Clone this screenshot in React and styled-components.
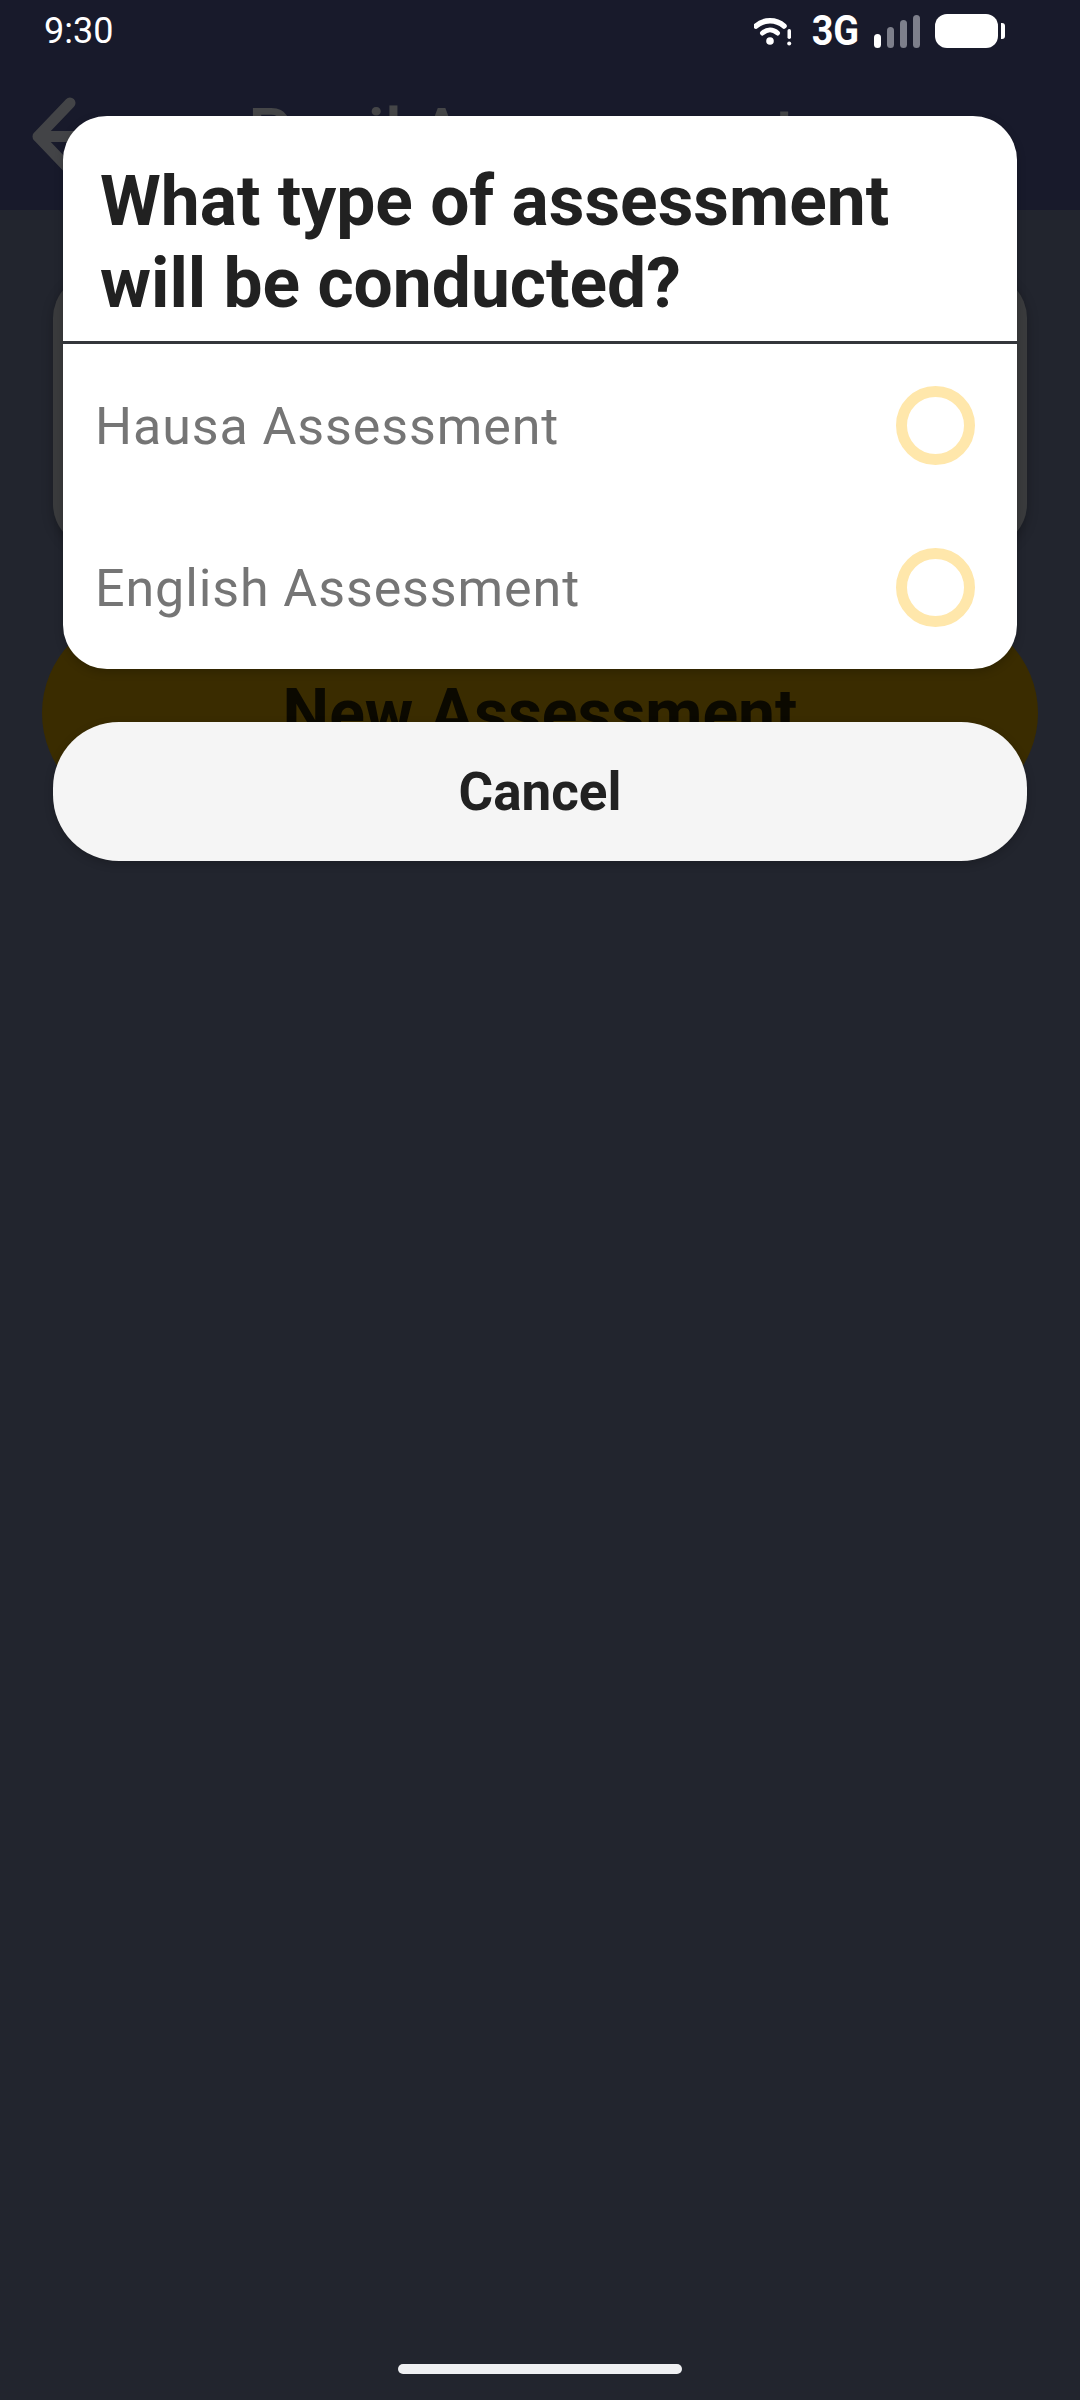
import styled, { createGlobalStyle } from "styled-components";

const GlobalStyle = createGlobalStyle`
  html, body {
    margin: 0;
    padding: 0;
    background: #22252e;
  }
  * {
    box-sizing: border-box;
  }
`;

const Screen = styled.div`
  position: relative;
  width: 1080px;
  height: 2400px;
  overflow: hidden;
  display: flex;
  flex-direction: column;
  background: #22252e;
  font-family: Roboto, "Liberation Sans", sans-serif;
`;

const TopArea = styled.div`
  height: 210px;
  flex-shrink: 0;
  background: #181a2b;
  display: flex;
  flex-direction: column;
`;

const StatusBar = styled.div`
  height: 62px;
  padding: 0 75px 0 44px;
  display: flex;
  align-items: center;
  justify-content: space-between;
  color: #fff;
`;

const Clock = styled.span`
  font-size: 36px;
  line-height: 58px;
`;

const StatusIcons = styled.div`
  display: flex;
  align-items: center;
  gap: 15px;
`;

const NetworkLabel = styled.span`
  font-size: 42px;
  font-weight: 700;
  line-height: 62px;
  margin: 0 -3px 0 2px;
  transform: scaleX(0.9);
`;

const Toolbar = styled.div`
  flex: 1;
  display: flex;
  align-items: flex-start;
  padding: 30px 0 0 26px;
`;

const ToolbarTitle = styled.h1`
  margin: 2px 0 0 112px;
  font-size: 68px;
  line-height: 80px;
  font-weight: 500;
  color: #454648;
`;

const Content = styled.div`
  flex: 1;
  display: flex;
  flex-direction: column;
  align-items: center;
  padding-top: 64px;
`;

const BackCard = styled.div`
  width: 974px;
  height: 274px;
  border-radius: 44px;
  background: #3a3b3d;
  box-shadow: 0 4px 12px rgba(0, 0, 0, 0.25);
`;

const NewButton = styled.div`
  width: 996px;
  height: 200px;
  margin-top: 65px;
  border-radius: 100px;
  background: #3a2c00;
  color: #0b0900;
  font-size: 66px;
  font-weight: 700;
  display: flex;
  align-items: center;
  justify-content: center;
`;

const HomeBar = styled.div`
  position: absolute;
  left: 398px;
  bottom: 26px;
  width: 284px;
  height: 10px;
  border-radius: 5px;
  background: #eff0f2;
`;

const Dialog = styled.div`
  position: absolute;
  top: 116px;
  left: 53px;
  width: 974px;
  display: flex;
  flex-direction: column;
  align-items: center;
  gap: 53px;
`;

const Sheet = styled.div`
  width: 954px;
  height: 553px;
  border-radius: 44px;
  background: #fff;
  box-shadow: 0 3px 10px rgba(0, 0, 0, 0.2);
  overflow: hidden;
`;

const SheetHeader = styled.div`
  height: 228px;
  padding: 45px 37px 0;
  border-bottom: 3px solid #34363b;
`;

const SheetTitle = styled.h2`
  margin: 0;
  font-size: 69.5px;
  line-height: 82px;
  font-weight: 700;
  color: #212121;
`;

const Option = styled.div`
  height: 162px;
  padding: 0 42px 0 32px;
  display: flex;
  align-items: center;
  justify-content: space-between;
`;

const OptionLabel = styled.span`
  margin-top: 2px;
  font-size: 52px;
  letter-spacing: 0.9px;
  color: #757575;
`;

const Radio = styled.span`
  width: 79px;
  height: 79px;
  border-radius: 50%;
  border: 11px solid #ffe7ab;
`;

const CancelButton = styled.div`
  width: 974px;
  height: 139px;
  border-radius: 66px;
  background: #f5f5f5;
  box-shadow: 0 3px 10px rgba(0, 0, 0, 0.2);
  color: #212121;
  font-size: 53px;
  font-weight: 700;
  display: flex;
  align-items: center;
  justify-content: center;
`;

const WifiIcon = () => (
  <svg width="38" height="30" viewBox="0 0 38 30" fill="none">
    <path d="M2 10C10 3 22 3 30 10" stroke="#fff" strokeWidth="5.500" strokeLinecap="round" />
    <path d="M8.500 17C13 13 19 13 23.500 17" stroke="#fff" strokeWidth="5" strokeLinecap="round" />
    <circle cx="16" cy="25" r="3.800" fill="#fff" />
    <rect x="33.500" y="13" width="3.500" height="10" rx="1.700" fill="#fff" />
    <circle cx="35.200" cy="27.500" r="2" fill="#fff" />
  </svg>
);

const SignalIcon = () => (
  <svg width="46" height="33" viewBox="0 0 46 33">
    <rect x="0" y="19" width="7" height="14" rx="3.500" fill="#fff" />
    <rect x="13" y="12" width="7" height="21" rx="3.500" fill="#7d7f8b" />
    <rect x="26" y="5" width="7" height="28" rx="3.500" fill="#7d7f8b" />
    <rect x="39" y="0" width="7" height="33" rx="3.500" fill="#7d7f8b" />
  </svg>
);

const BatteryIcon = () => (
  <svg width="70" height="35" viewBox="0 0 70 35">
    <rect x="0" y="0" width="63" height="34" rx="12" fill="#fff" />
    <path d="M66 9h1a3 3 0 0 1 3 3v10a3 3 0 0 1-3 3h-1z" fill="#fff" />
  </svg>
);

const BackArrow = () => (
  <svg width="110" height="90" viewBox="0 0 110 90" fill="none">
    <path
      d="M44 11L12 44.500L44 78M12 44.500H108"
      stroke="#434447"
      strokeWidth="11"
      strokeLinecap="round"
      strokeLinejoin="round"
    />
  </svg>
);

const options = ["Hausa Assessment", "English Assessment"];

const App = () => {
  return (
    <Screen>
      <GlobalStyle />
      <TopArea>
        <StatusBar>
          <Clock>9:30</Clock>
          <StatusIcons>
            <WifiIcon />
            <NetworkLabel>3G</NetworkLabel>
            <SignalIcon />
            <BatteryIcon />
          </StatusIcons>
        </StatusBar>
        <Toolbar>
          <BackArrow />
          <ToolbarTitle>Pupil Assessment</ToolbarTitle>
        </Toolbar>
      </TopArea>
      <Content>
        <BackCard />
        <NewButton>New Assessment</NewButton>
      </Content>
      <Dialog>
        <Sheet>
          <SheetHeader>
            <SheetTitle>
              What type of assessment
              <br />
              will be conducted?
            </SheetTitle>
          </SheetHeader>
          {options.map((label) => (
            <Option key={label}>
              <OptionLabel>{label}</OptionLabel>
              <Radio />
            </Option>
          ))}
        </Sheet>
        <CancelButton>Cancel</CancelButton>
      </Dialog>
      <HomeBar />
    </Screen>
  );
};

export default App;
